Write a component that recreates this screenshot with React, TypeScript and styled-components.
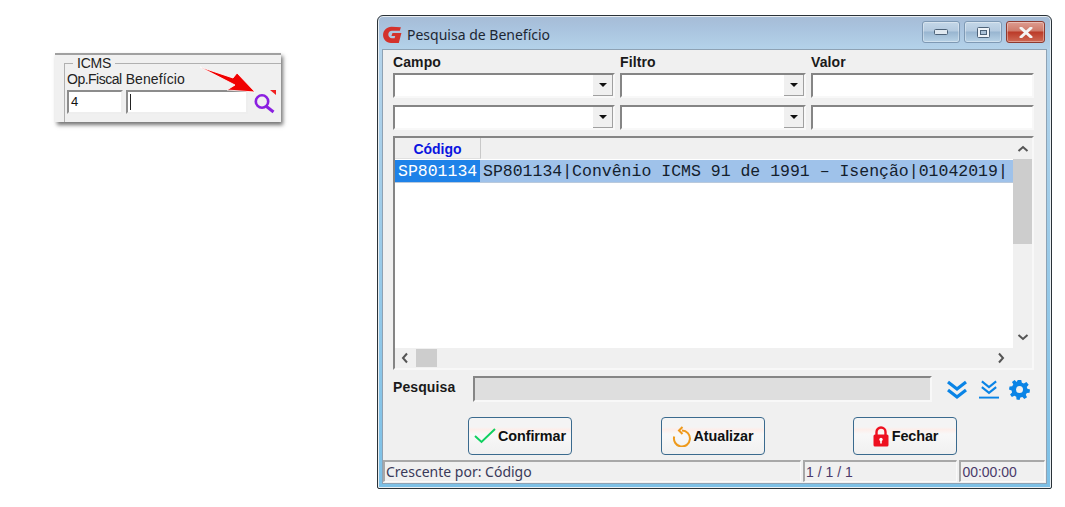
import React, { FC } from 'react';
import styled, { createGlobalStyle } from 'styled-components';

const GlobalStyle = createGlobalStyle`
	html, body {
		margin: 0;
		padding: 0;
		background: #fff;
	}
	* {
		box-sizing: border-box;
	}
`;

const Page = styled.div`
	width: 1065px;
	height: 507px;
	overflow: hidden;
	display: flex;
	align-items: flex-start;
	padding: 15px 0 0 55px;
	gap: 96px;
	font-family: 'Noto Sans', 'Liberation Sans', sans-serif;
`;

/* recorte ICMS */
const IcmsPanel = styled.div`
	position: relative;
	margin-top: 38px;
	width: 226px;
	height: 69px;
	background: #f0f0f0;
	border-top: 2px solid #a0a0a0;
	box-shadow: 2px 3px 4px rgba(0, 0, 0, 0.55);
	padding: 3px 0 0 9px;
`;

const GroupBox = styled.fieldset`
	margin: 0;
	width: 217px;
	height: 64px;
	border: 0;
	border-top: 1px solid #b0b0b0;
	border-left: 1px solid #b0b0b0;
	padding: 0 0 0 2px;
	min-width: 0;
`;

const GroupTitle = styled.legend`
	margin-left: 6px;
	padding: 0 4px;
	font-family: 'Liberation Sans', sans-serif;
	font-size: 14px;
	line-height: 11px;
	letter-spacing: -0.2px;
	color: #222;
`;

const IcmsLabels = styled.div`
	display: flex;
	gap: 4px;
	margin-top: 2px;
	font-family: 'Liberation Sans', sans-serif;
	font-size: 14px;
	line-height: 17px;
	color: #222;
`;

const IcmsLabel = styled.span<{ $spacing: number }>`
	letter-spacing: ${p => p.$spacing}px;
`;

const IcmsInputs = styled.div`
	display: flex;
	gap: 3px;
	margin-top: 2px;
`;

const IcmsInput = styled.div<{ $w: number }>`
	width: ${p => p.$w}px;
	height: 24px;
	background: #fff;
	border: 2px solid;
	border-color: #8c8c8c #eee #eee #8c8c8c;
	font-family: 'Liberation Sans', sans-serif;
	font-size: 13px;
	line-height: 20px;
	padding-left: 2px;
	color: #111;
`;

const Caret = styled.span`
	display: inline-block;
	width: 1px;
	height: 16px;
	background: #222;
	margin-top: 2px;
`;

const OverIcon = styled.svg`
	position: absolute;
	left: 145px;
	top: 10px;
`;

/* janela */
const Win = styled.div`
	width: 675px;
	height: 474px;
	border: 1px solid #2a3238;
	border-radius: 6px 6px 2px 2px;
	background: linear-gradient(180deg, #a6bcd6 0%, #a9c3de 12px, #b4d3ea 34px, #7cc0e6 100%);
	padding: 0 4px 4px;
	display: flex;
	flex-direction: column;
	box-shadow: 0 0 0 1px #e9eef2 inset;
`;

const TitleBar = styled.div`
	height: 33px;
	flex: none;
	display: flex;
	align-items: center;
	padding: 3px 0 0 0;
`;

const TitleText = styled.div`
	margin-left: 4px;
	flex: 1;
	font-size: 14px;
	color: #1d2733;
`;

const CaptionGroup = styled.div`
	display: flex;
	gap: 4px;
	align-self: flex-start;
	margin-top: 2px;
	margin-right: 2px;
`;

const CaptionBtn = styled.div<{ $close?: boolean }>`
	width: ${p => (p.$close ? 39 : 38)}px;
	height: 22px;
	border: 1px solid ${p => (p.$close ? '#8e3a30' : '#7e99b4')};
	border-radius: 3px;
	background: ${p =>
		p.$close
			? 'linear-gradient(180deg, #dd9c90 0%, #cf7a6a 45%, #bb3a28 50%, #cf6a55 100%)'
			: 'linear-gradient(180deg, #c4d7e8 0%, #b4cadf 45%, #98b5d0 50%, #b8d2e6 100%)'};
	box-shadow: 0 0 0 1px rgba(255, 255, 255, 0.35) inset;
	display: flex;
	align-items: center;
	justify-content: center;
`;

const Client = styled.div`
	flex: 1;
	background: #f0f0f0;
	border: 1px solid #8ea2b4;
	padding: 4px 11px 0 10px;
	display: flex;
	flex-direction: column;
	min-height: 0;
`;

const FilterGrid = styled.div`
	display: grid;
	grid-template-columns: 222px 186px 223px;
	column-gap: 5px;
	row-gap: 7px;
`;

const BoldLabel = styled.div`
	font-family: 'Liberation Sans', sans-serif;
	font-weight: bold;
	font-size: 14px;
	line-height: 15px;
	letter-spacing: 0.1px;
	color: #1a1a1a;
`;

const FilterLabel = styled(BoldLabel)`
	height: 12px;
	line-height: 17px;
`;

const ComboBox = styled.div`
	height: 25px;
	background: #fff;
	border: 2px solid;
	border-color: #858585 #f8f8f8 #f8f8f8 #858585;
	display: flex;
	justify-content: flex-end;
`;

const ComboButton = styled.div`
	width: 20px;
	background: #f0f0f0;
	border-right: 1px solid #a0a0a0;
	border-bottom: 1px solid #a0a0a0;
	display: flex;
	align-items: center;
	justify-content: center;
`;

const Arrow = styled.div`
	width: 0;
	height: 0;
	border-left: 4px solid transparent;
	border-right: 4px solid transparent;
	border-top: 4px solid #111;
`;

const TextBox = styled.div`
	height: 25px;
	background: #fff;
	border: 2px solid;
	border-color: #858585 #f8f8f8 #f8f8f8 #858585;
`;

const GridFrame = styled.div`
	margin-top: 6px;
	height: 234px;
	width: 641px;
	flex: none;
	border: 2px solid;
	border-color: #858585 #f8f8f8 #f8f8f8 #858585;
	background: #fff;
	display: grid;
	grid-template-columns: 1fr 19px;
	grid-template-rows: 1fr 20px;
`;

const GridBody = styled.div`
	min-width: 0;
	overflow: hidden;
`;

const HeaderRow = styled.div`
	display: flex;
	height: 21px;
	background: #f0f0f0;
`;

const HeaderCell = styled.div`
	width: 86px;
	border-right: 1px solid #c8c8c8;
	border-bottom: 1px solid #e0e0e0;
	text-align: center;
	font-family: 'Liberation Sans', sans-serif;
	font-weight: bold;
	font-size: 14px;
	line-height: 22px;
	color: #0a14e0;
`;

const DataRow = styled.div`
	margin-top: 1px;
	height: 23px;
	display: flex;
	background: #9fc2ea;
	border-bottom: 1px solid #b9c9dc;
	font-family: 'Liberation Mono', monospace;
	font-size: 16.5px;
	line-height: 23px;
	color: #14202c;
	white-space: nowrap;
`;

const KeyCell = styled.div`
	width: 85px;
	flex: none;
	background: #1e82e8;
	color: #fff;
	padding-left: 3px;
`;

const ValueCell = styled.div`
	padding-left: 3px;
`;

const VBar = styled.div`
	background: #f0f0f0;
	display: flex;
	flex-direction: column;
	align-items: center;
	justify-content: space-between;
	padding: 0 0 1px;
`;

const VThumb = styled.div`
	width: 19px;
	height: 85px;
	background: #cdcdcd;
`;

const VTrackTop = styled.div`
	display: flex;
	flex-direction: column;
	align-items: center;
`;

const ArrowCell = styled.div`
	height: 21px;
	width: 19px;
	display: flex;
	align-items: center;
	justify-content: center;
`;

const HBar = styled.div`
	background: #f0f0f0;
	display: flex;
	align-items: center;
	justify-content: space-between;
	padding: 0 8px 0 6px;
`;

const HTrack = styled.div`
	display: flex;
	align-items: center;
	height: 100%;
	gap: 7px;
`;

const HThumb = styled.div`
	width: 21px;
	height: 18px;
	background: #cdcdcd;
`;

const Corner = styled.div`
	background: #f0f0f0;
`;

const SearchRow = styled.div`
	margin-top: 6px;
	display: flex;
	align-items: center;
	height: 26px;
`;

const SearchLabel = styled(BoldLabel)`
	width: 80px;
	margin-top: -3px;
`;

const SearchBox = styled.div`
	width: 459px;
	height: 26px;
	background: #dedede;
	border: 2px solid;
	border-color: #858585 #f8f8f8 #f8f8f8 #858585;
`;

const SearchTools = styled.div`
	margin-left: 14px;
	display: flex;
	align-items: center;
	gap: 10.5px;
`;

const ButtonRow = styled.div`
	margin-top: 15px;
	display: flex;
	padding-left: 75px;
	gap: 88.5px;
`;

const ActionButton = styled.div`
	width: 104px;
	height: 38px;
	border: 1px solid #3a6a8e;
	border-radius: 4px;
	background: linear-gradient(180deg, #f4f4f4 0%, #f4f4f4 25%, #fdeeea 32%, #f8f8f8 45%, #f0f0f0 100%);
	display: flex;
	align-items: center;
	justify-content: center;
	gap: 2px;
	font-family: 'Liberation Sans', sans-serif;
	font-weight: bold;
	font-size: 14.4px;
	letter-spacing: -0.1px;
	color: #111;
`;

const StatusBar = styled.div`
	margin: auto -11px 0 -10px;
	height: 23px;
	display: flex;
	gap: 2px;
	padding: 0 1px 1px 0;
`;

const StatusCell = styled.div<{ $w: number; $arial?: boolean }>`
	width: ${p => p.$w}px;
	border-top: 2px solid #a8a8a8;
	border-left: 2px solid #a8a8a8;
	border-right: 1px solid #fafafa;
	border-bottom: 1px solid #fafafa;
	font-family: ${p => (p.$arial ? "'Liberation Sans', sans-serif" : "'Noto Sans', sans-serif")};
	font-size: 14px;
	line-height: 20px;
	padding-left: 1px;
	white-space: nowrap;
	color: ${p => (p.$arial ? '#4a3a6a' : '#3a3a5a')};
`;

const ChevronDown: FC = () => (
	<svg width="12" height="8" viewBox="0 0 12 8">
		<path d="M1.5 6 L6 2 L10.5 6" transform="rotate(180 6 4)" fill="none" stroke="#555" strokeWidth="2" />
	</svg>
);

const ChevronUp: FC = () => (
	<svg width="12" height="8" viewBox="0 0 12 8">
		<path d="M1.5 6 L6 2 L10.5 6" fill="none" stroke="#555" strokeWidth="2" />
	</svg>
);

const ChevronLeft: FC = () => (
	<svg width="8" height="12" viewBox="0 0 8 12">
		<path d="M6 1.5 L2 6 L6 10.5" fill="none" stroke="#555" strokeWidth="2" />
	</svg>
);

const ChevronRight: FC = () => (
	<svg width="8" height="12" viewBox="0 0 8 12">
		<path d="M2 1.5 L6 6 L2 10.5" fill="none" stroke="#555" strokeWidth="2" />
	</svg>
);

const AppLogo: FC = () => (
	<svg width="21" height="21" viewBox="0 0 20 20">
		<path
			d="M18 3 L17 6.5 H9.5 C7.5 6.5 6 8 6 10 C6 12 7.5 13.5 9.5 13.5 H12 L12.6 11.5 H9 L10 8.5 H18.5 L16 18 H8.5 C4 18 1 14.5 1 10.5 C1 6 4.5 2.5 9 2.5 Z"
			fill="#d4322c"
		/>
	</svg>
);

const App: FC = () => {
	const rows = [0, 1];

	return (
		<Page>
			<GlobalStyle />
			<IcmsPanel>
				<GroupBox>
					<GroupTitle>ICMS</GroupTitle>
					<IcmsLabels>
						<IcmsLabel $spacing={-0.5}>Op.Fiscal</IcmsLabel>
						<IcmsLabel $spacing={0.1}>Benefício</IcmsLabel>
					</IcmsLabels>
					<IcmsInputs>
						<IcmsInput $w={56}>4</IcmsInput>
						<IcmsInput $w={122}>
							<Caret />
						</IcmsInput>
					</IcmsInputs>
				</GroupBox>
				<OverIcon width="78" height="50" viewBox="0 0 78 50">
					<path d="M0 2 L33 13 L37 8 L55 27 L27 25 L35 20 Z" fill="#f00000" stroke="#fff" strokeWidth="0.8" />
					<circle cx="62" cy="36.5" r="6.2" fill="none" stroke="#8a1fe0" strokeWidth="2.6" />
					<path d="M66.5 41.5 L73.5 47" stroke="#8a1fe0" strokeWidth="3" />
					<path d="M70 25 H76 V30 Z" fill="#f02020" />
				</OverIcon>
			</IcmsPanel>

			<Win>
				<TitleBar>
					<AppLogo />
					<TitleText>Pesquisa de Benefício</TitleText>
					<CaptionGroup>
						<CaptionBtn>
							<svg width="14" height="6" viewBox="0 0 14 6">
								<rect x="0.5" y="0.5" width="13" height="5" rx="1" fill="#dfe8f0" stroke="#4d6278" />
							</svg>
						</CaptionBtn>
						<CaptionBtn>
							<svg width="13" height="11" viewBox="0 0 13 11">
								<rect x="0.5" y="0.5" width="12" height="10" rx="1" fill="#eef3f8" stroke="#4d6278" />
								<rect x="3.5" y="3.5" width="6" height="4" fill="#a9c0d6" stroke="#4d6278" />
							</svg>
						</CaptionBtn>
						<CaptionBtn $close>
							<svg width="14" height="11" viewBox="0 0 14 11">
								<path d="M2 1 L12 10 M12 1 L2 10" stroke="#f4f4f4" strokeWidth="3" strokeLinecap="round" />
							</svg>
						</CaptionBtn>
					</CaptionGroup>
				</TitleBar>

				<Client>
					<FilterGrid>
						<FilterLabel>Campo</FilterLabel>
						<FilterLabel>Filtro</FilterLabel>
						<FilterLabel>Valor</FilterLabel>
						{rows.map(r => (
							<React.Fragment key={r}>
								<ComboBox>
									<ComboButton>
										<Arrow />
									</ComboButton>
								</ComboBox>
								<ComboBox>
									<ComboButton>
										<Arrow />
									</ComboButton>
								</ComboBox>
								<TextBox />
							</React.Fragment>
						))}
					</FilterGrid>

					<GridFrame>
						<GridBody>
							<HeaderRow>
								<HeaderCell>Código</HeaderCell>
							</HeaderRow>
							<DataRow>
								<KeyCell>SP801134</KeyCell>
								<ValueCell>SP801134|Convênio ICMS 91 de 1991 – Isenção|01042019|</ValueCell>
							</DataRow>
						</GridBody>
						<VBar>
							<VTrackTop>
								<ArrowCell>
									<ChevronUp />
								</ArrowCell>
								<VThumb />
							</VTrackTop>
							<ArrowCell>
								<ChevronDown />
							</ArrowCell>
						</VBar>
						<HBar>
							<HTrack>
								<ChevronLeft />
								<HThumb />
							</HTrack>
							<ChevronRight />
						</HBar>
						<Corner />
					</GridFrame>

					<SearchRow>
						<SearchLabel>Pesquisa</SearchLabel>
						<SearchBox />
						<SearchTools>
							<svg width="22" height="21" viewBox="0 0 22 21">
								<path d="M2 3 L11 10 L20 3 M2 11 L11 18 L20 11" fill="none" stroke="#0a84e6" strokeWidth="3.2" />
							</svg>
							<svg width="20" height="21" viewBox="0 0 21 21">
								<path d="M3 2 L10.5 8 L18 2 M3 8 L10.5 14 L18 8" fill="none" stroke="#0a84e6" strokeWidth="2.2" />
								<path d="M0 19 H21" stroke="#0a84e6" strokeWidth="2" />
							</svg>
							<svg width="21" height="21" viewBox="0 0 24 24">
								<path
									fillRule="evenodd"
									d="M10 1 H14 L14.7 4.2 L17 5.2 L19.9 3.5 L22.5 6.6 L20.3 9.1 L21 11 L24 12 L23.5 15.6 L20.4 15.9 L19.2 18 L20.6 20.9 L17.5 22.9 L15.3 20.6 L13 21 L12 24 L8.6 23.4 L8.3 20.3 L6.2 19.2 L3.3 20.6 L1.2 17.6 L3.5 15.4 L3 13 L0 12 L0.6 8.5 L3.7 8.2 L4.9 6 L3.4 3.3 L6.4 1.2 L8.8 3.5 Z M12 8 A4 4 0 1 0 12 16 A4 4 0 1 0 12 8 Z"
									fill="#0a84e6"
								/>
							</svg>
						</SearchTools>
					</SearchRow>

					<ButtonRow>
						<ActionButton>
							<svg width="22" height="16" viewBox="0 0 22 16">
								<path d="M1 8 L7.5 14 L21 1" fill="none" stroke="#10d060" strokeWidth="2" />
							</svg>
							Confirmar
						</ActionButton>
						<ActionButton>
							<svg width="20" height="22" viewBox="0 0 20 22">
								<path d="M10 5.5 A8 8 0 1 1 2.2 11.5" fill="none" stroke="#ee9a1c" strokeWidth="2" />
								<path d="M10.5 2 L7 5.5 L10.5 9" fill="none" stroke="#ee9a1c" strokeWidth="2" />
							</svg>
							Atualizar
						</ActionButton>
						<ActionButton>
							<svg width="18" height="21" viewBox="0 0 18 21">
								<path d="M4.5 9 V6 A4.5 4.5 0 0 1 13.5 6 V9" fill="none" stroke="#ee1020" strokeWidth="2.4" />
								<rect x="1.5" y="8.5" width="15" height="12" rx="1.5" fill="#ee1020" />
								<circle cx="9" cy="13.5" r="1.7" fill="#fff" />
								<rect x="8.2" y="14" width="1.6" height="3.5" fill="#fff" />
							</svg>
							Fechar
						</ActionButton>
					</ButtonRow>

					<StatusBar>
						<StatusCell $w={420}>Crescente por: Código</StatusCell>
						<StatusCell $w={155} $arial>1 / 1 / 1</StatusCell>
						<StatusCell $w={86} $arial>00:00:00</StatusCell>
					</StatusBar>
				</Client>
			</Win>
		</Page>
	);
};

export default App;
